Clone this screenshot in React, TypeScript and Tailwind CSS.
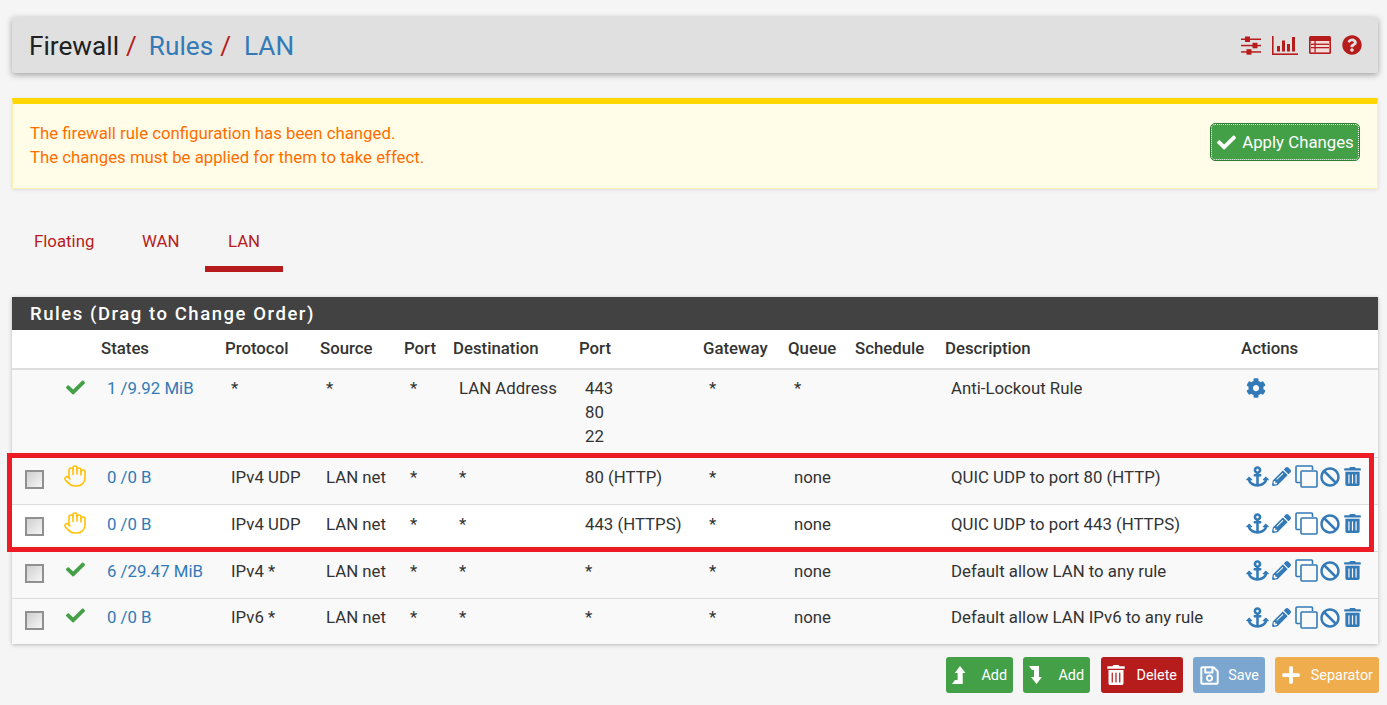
import React from "react";
import { FaQuestionCircle, FaCheck, FaAnchor, FaPencilAlt, FaBan, FaTrashAlt, FaCog, FaRegSave, FaPlus } from "react-icons/fa";
import { Hand } from "lucide-react";

const widths = [48, 41, 124, 95, 84, 49, 126, 124, 85, 67, 90, 296, 137];
const heads = ["", "", "States", "Protocol", "Source", "Port", "Destination", "Port", "Gateway", "Queue", "Schedule", "Description", "Actions"];

type Row = { icon: "check" | "hand"; states: string; proto: string; src: string; sport: string; dest: string; port: string; desc: string };
const rows: Row[] = [
  { icon: "hand", states: "0 /0 B", proto: "IPv4 UDP", src: "LAN net", sport: "*", dest: "*", port: "80 (HTTP)", desc: "QUIC UDP to port 80 (HTTP)" },
  { icon: "hand", states: "0 /0 B", proto: "IPv4 UDP", src: "LAN net", sport: "*", dest: "*", port: "443 (HTTPS)", desc: "QUIC UDP to port 443 (HTTPS)" },
  { icon: "check", states: "6 /29.47 MiB", proto: "IPv4 *", src: "LAN net", sport: "*", dest: "*", port: "*", desc: "Default allow LAN to any rule" },
  { icon: "check", states: "0 /0 B", proto: "IPv6 *", src: "LAN net", sport: "*", dest: "*", port: "*", desc: "Default allow LAN IPv6 to any rule" },
];

function Cell({ children, top = "pt-[6px]" }: { children?: React.ReactNode; top?: string }) {
  return <td className={`pl-[6px] align-top ${top} overflow-visible whitespace-nowrap`}>{children}</td>;
}

function Sliders() {
  return (
    <svg width="20" height="19" viewBox="0 0 20 19" fill="currentColor">
      <rect x="0" y="2.5" width="20" height="1.5" />
      <rect x="0" y="8.8" width="20" height="1.5" />
      <rect x="0" y="15.2" width="20" height="1.5" />
      <rect x="4" y="0.5" width="5" height="5.5" />
      <rect x="11.5" y="6.8" width="5" height="5.5" />
      <rect x="5.5" y="13.2" width="5" height="5.5" />
    </svg>
  );
}

function Chart() {
  return (
    <svg width="26" height="19" viewBox="0 0 26 19" fill="currentColor">
      <rect x="0" y="0" width="1.6" height="19" />
      <rect x="0" y="17.4" width="26" height="1.6" />
      <rect x="5" y="10" width="3" height="5.5" />
      <rect x="10" y="4.5" width="3" height="11" />
      <rect x="15" y="8" width="3" height="7.5" />
      <rect x="20" y="1" width="3" height="14.5" />
    </svg>
  );
}

function TableIcon() {
  return (
    <svg width="22" height="18" viewBox="0 0 22 18">
      <rect x="0" y="0" width="22" height="18" rx="1.5" fill="currentColor" />
      <rect x="1.6" y="5" width="18.8" height="11.4" fill="#f3dcdc" />
      <rect x="2" y="7.6" width="18" height="1.3" fill="currentColor" />
      <rect x="2" y="11" width="18" height="1.3" fill="currentColor" />
      <rect x="5.4" y="5" width="1.3" height="11.4" fill="currentColor" />
    </svg>
  );
}

function Clone() {
  return (
    <svg width="23" height="23" viewBox="0 0 23 23" fill="none" stroke="currentColor" strokeWidth="1.6" className="ml-[4px]">
      <path d="M5 17.5H2a1 1 0 0 1-1-1V2a1 1 0 0 1 1-1h14.5a1 1 0 0 1 1 1v3" />
      <rect x="6" y="6" width="16" height="16" rx="1" />
    </svg>
  );
}

function Actions() {
  return (
    <div className="flex items-center text-[#337ab7] h-[24px] pl-[5px]">
      <FaAnchor className="w-[23px] h-[21px]" />
      <FaPencilAlt className="w-[19px] h-[19px] ml-[3px]" />
      <Clone />
      <FaBan className="w-[20px] h-[20px] ml-[2px]" />
      <FaTrashAlt className="w-[17px] h-[19px] ml-[4px]" />
    </div>
  );
}

function LevelUp() {
  return (
    <svg width="14" height="19" viewBox="0 0 14 19" fill="currentColor">
      <polygon points="8,0 13.5,7 10.7,7 10.7,18 0,18 3,14 5.6,14 5.6,7 2.8,7" />
    </svg>
  );
}

function LevelDown() {
  return (
    <svg width="14" height="18" viewBox="0 0 14 18" fill="currentColor">
      <polygon points="0,0 10,0 10,11 13,11 7.5,18 2,11 5,11 5,4 3,4" />
    </svg>
  );
}

function FootBtn({ cls, w, icon, label }: { cls: string; w: string; icon: React.ReactNode; label: string }) {
  return (
    <button className={`${cls} ${w} h-[36px] rounded-[3px] text-white text-[14.4px] flex items-center justify-between pl-[6px] pr-[6px]`}>
      {icon}
      <span className="pt-[1px]">{label}</span>
    </button>
  );
}

export default function App() {
  return (
    <div className="relative w-[1387px] h-[705px] overflow-hidden bg-[#f5f5f5] pl-[12px] pr-[9px] pt-[17px] text-[16.8px] leading-[24px] text-[#333333] font-['Roboto',sans-serif]">
      <div className="h-[56px] bg-[#e0e0e0] rounded-[2px] shadow-[0_2px_6px_rgba(0,0,0,0.35)] flex items-center justify-between pl-[17px] pr-[16px]">
        <div className="text-[26.2px] leading-[30px] whitespace-nowrap pt-[2px]">
          <span className="text-[#212121]">Firewall</span>
          <span className="text-[#b71c1c] ml-[7px]">/</span>
          <span className="text-[#337ab7] ml-[12px]">Rules</span>
          <span className="text-[#b71c1c] ml-[7px]">/</span>
          <span className="text-[#337ab7] ml-[13px]">LAN</span>
        </div>
        <div className="flex items-center text-[#b71c1c] gap-[11px]">
          <Sliders />
          <Chart />
          <TableIcon />
          <FaQuestionCircle className="w-[20px] h-[20px]" />
        </div>
      </div>

      <div className="mt-[25px] h-[91px] bg-[#fffde7] border-t-[6px] border-t-[#ffd600] border-x border-b border-x-[#ffecb3] border-b-[#ffecb3] shadow-[0_1px_4px_rgba(0,0,0,0.1)] flex items-center justify-between pl-[17px] pr-[17px]">
        <div className="text-[#ff6d00] pb-[2px]">
          <div>The firewall rule configuration has been changed.</div>
          <div>The changes must be applied for them to take effect.</div>
        </div>
        <button className="w-[148px] h-[36px] mr-[1px] bg-[#43a047] rounded-[4px] text-white flex items-center justify-center gap-[5px] border border-dotted border-white outline outline-1 outline-[#2e7d32] -mt-[8px] whitespace-nowrap">
          <FaCheck className="w-[21px] h-[19px] shrink-0" />
          <span>Apply Changes</span>
        </button>
      </div>

      <div className="mt-[28px] h-[55px] flex text-[#b71c1c]">
        <div className="w-[103px] pl-[22px] pt-[12px]">Floating</div>
        <div className="w-[90px] pl-[27px] pt-[12px]">WAN</div>
        <div className="w-[78px] text-center pt-[12px] border-b-[6px] border-[#b71c1c]">LAN</div>
      </div>

      <div className="mt-[25px] bg-[#f9f9f9] shadow-[0_1px_4px_rgba(0,0,0,0.25)]">
        <div className="h-[33px] bg-[#424242] text-white font-medium text-[18.5px] tracking-[1.55px] leading-[35px] pl-[18px] whitespace-nowrap overflow-hidden">Rules (Drag to Change Order)</div>
        <table className="w-[1366px] table-fixed border-collapse">
          <colgroup>
            {widths.map((w, i) => <col key={i} style={{ width: w }} />)}
          </colgroup>
          <thead>
            <tr className="h-[39px] bg-white border-b-2 border-[#dddddd]">
              {heads.map((h, i) => (
                <th key={i} className="text-left font-medium text-[#333333] whitespace-nowrap p-0 pb-[3px]">{h}</th>
              ))}
            </tr>
          </thead>
          <tbody>
            <tr className="h-[88px] bg-[#f9f9f9]">
              <Cell />
              <Cell><FaCheck className="w-[21px] h-[19px] text-[#43a047] -ml-[1px] mt-[2px]" /></Cell>
              <Cell><span className="text-[#337ab7]">1 /9.92 MiB</span></Cell>
              <Cell>*</Cell>
              <Cell>*</Cell>
              <Cell>*</Cell>
              <Cell>LAN Address</Cell>
              <Cell>443<br />80<br />22</Cell>
              <Cell>*</Cell>
              <Cell>*</Cell>
              <Cell />
              <Cell>Anti-Lockout Rule</Cell>
              <td className="align-top pt-[7px] pl-[5px]"><FaCog className="w-[20px] h-[20px] text-[#337ab7] mt-[1px]" /></td>
            </tr>
            {rows.map((r, i) => {
              const top = i === 3 ? "pt-[6px]" : "pt-[7px]";
              return (
                <tr key={i} className={`${i === 3 ? "h-[46px]" : "h-[47px]"} border-t border-[#dddddd] ${i === 1 ? "bg-white" : "bg-[#f9f9f9]"}`}>
                  <td className="pl-[13px] align-top pt-[12px]">
                    <div className="w-[19px] h-[19px] border-2 border-[#909090] bg-gradient-to-br from-[#d0d0d0] to-[#f5f5f5]" />
                  </td>
                  <Cell top={top}>
                    {r.icon === "check"
                      ? <FaCheck className="w-[21px] h-[19px] text-[#43a047] -ml-[1px] mt-[1px]" />
                      : <Hand strokeWidth={1.6} className="w-[24px] h-[24px] text-[#ffc107] -ml-[3px] -mt-[1px]" />}
                  </Cell>
                  <Cell top={top}><span className="text-[#337ab7]">{r.states}</span></Cell>
                  <Cell top={top}>{r.proto}</Cell>
                  <Cell top={top}>{r.src}</Cell>
                  <Cell top={top}>{r.sport}</Cell>
                  <Cell top={top}>{r.dest}</Cell>
                  <Cell top={top}>{r.port}</Cell>
                  <Cell top={top}>*</Cell>
                  <Cell top={top}>none</Cell>
                  <Cell top={top} />
                  <Cell top={top}>{r.desc}</Cell>
                  <td className="align-top pt-[7px]"><Actions /></td>
                </tr>
              );
            })}
          </tbody>
        </table>
      </div>

      <div className="mt-[13px] flex justify-end gap-[10px] -mr-[1px]">
        <FootBtn cls="bg-[#43a047]" w="w-[67px]" label="Add" icon={<LevelUp />} />
        <FootBtn cls="bg-[#43a047]" w="w-[67px]" label="Add" icon={<LevelDown />} />
        <FootBtn cls="bg-[#b71c1c] ml-[1px]" w="w-[82px]" label="Delete" icon={<FaTrashAlt className="w-[18px] h-[20px]" />} />
        <FootBtn cls="bg-[#7ba6cf]" w="w-[72px]" label="Save" icon={<FaRegSave className="w-[21px] h-[21px]" />} />
        <FootBtn cls="bg-[#f0ad4e]" w="w-[104px]" label="Separator" icon={<FaPlus className="w-[20px] h-[20px]" />} />
      </div>

      <div className="absolute left-[7px] top-[453px] w-[1367px] h-[99px] border-[5px] border-[#ed1c24] pointer-events-none" />
    </div>
  );
}
